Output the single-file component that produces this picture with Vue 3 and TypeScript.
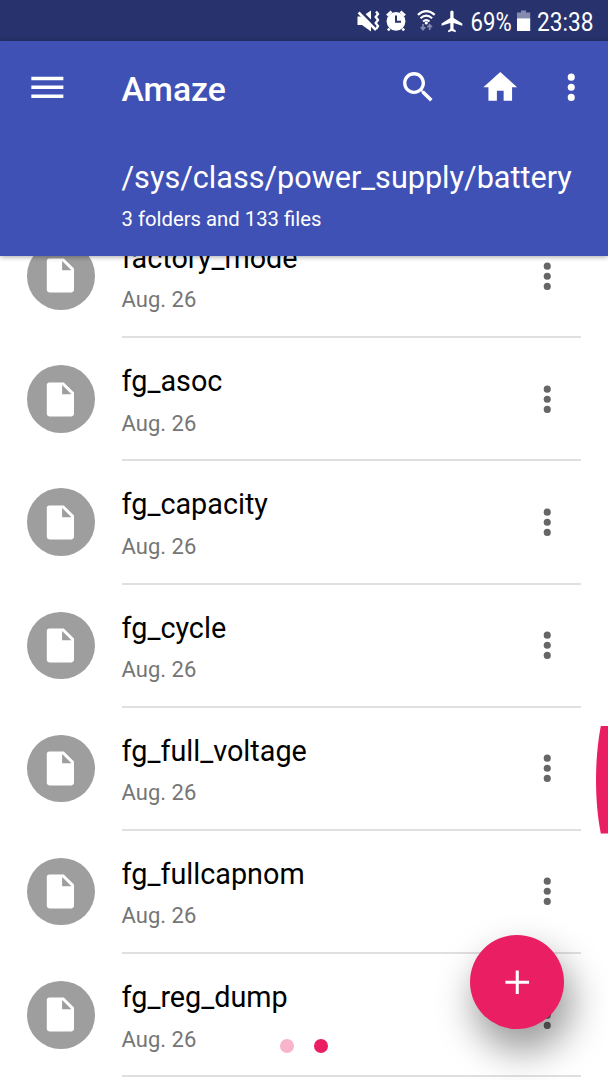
<script setup lang="ts">
interface FileEntry {
  name: string
  date: string
}

const files: FileEntry[] = [
  'factory_mode',
  'fg_asoc',
  'fg_capacity',
  'fg_cycle',
  'fg_full_voltage',
  'fg_fullcapnom',
  'fg_reg_dump',
].map((name) => ({ name, date: 'Aug. 26' }))
</script>

<template>
  <div class="screen">
    <div class="status">
      <svg class="status-art" width="608" height="40" viewBox="0 0 608 40">
        <g fill="#fff">
          <path d="M357.500 16.500h4.500l9-6v21l-9-6.500h-4.500z" />
          <path d="M360 10.500L378 28.500" stroke="#28326c" stroke-width="2.600" />
          <path d="M358.600 12.500L376 30" stroke="#fff" stroke-width="2.500" />
          <path d="M376 11.500l2 2.500-2.300 3 2.300 3-2.300 3 2.300 3-1.800 3" fill="none" stroke="#fff" stroke-width="2.300" />
        </g>
        <circle cx="396" cy="21.300" r="9.400" fill="#fff" />
        <path d="M387 15.500l4.500-4M405 15.500l-4.500-4M389.500 28.500l-1.500 2M402.500 28.500l1.500 2" stroke="#fff" stroke-width="2.600" fill="none" />
        <path d="M396 15.500v6.200h5" fill="none" stroke="#28326c" stroke-width="2" />
        <g fill="none" stroke="#fff" stroke-width="2.200">
          <path d="M417.900 14.800q8.400-7.400 16.800 0" />
          <path d="M420.500 18.300q5.800-5.300 11.600 0" />
          <path d="M423.100 21.500q3.200-2.800 6.400 0" />
        </g>
        <circle cx="426.300" cy="23" r="1.600" fill="#fff" />
        <path d="M423 24v5M420.700 27l2.300 2.600 2.300-2.600M429.700 30v-5M427.400 27.300l2.300-2.600 2.300 2.600" fill="none" stroke="#858bae" stroke-width="1.700" />
        <path transform="translate(439.400 8.200) scale(1.090)" d="M21 16v-2l-8-5V3.500c0-.83-.67-1.500-1.500-1.500S10 2.670 10 3.500V9l-8 5v2l8-2.500V19l-2 1.500V22l3.500-1 3.500 1v-1.500L13 19v-5.500l8 2.500z" fill="#fff" />
        <path d="M517 12.500h4v-2h5v2h4.200V18.500H517z" fill="#858bae" />
        <path d="M517 18.300h13.200V31H517z" fill="#fff" />
        <g class="status-text">
          <text x="470.600" y="30.500" textLength="41" lengthAdjust="spacingAndGlyphs">69%</text>
          <text x="537" y="30.500" textLength="56.500" lengthAdjust="spacingAndGlyphs">23:38</text>
        </g>
      </svg>
    </div>

    <header class="header">
      <div class="toolbar">
        <svg class="menu" viewBox="0 0 24 24"><path d="M3 18h18v-2H3v2zm0-5h18v-2H3v2zm0-7v2h18V6H3z" /></svg>
        <h1 class="title">Amaze</h1>
        <svg class="icon" viewBox="0 0 24 24"><path d="M15.500 14h-.79l-.28-.27C15.410 12.590 16 11.110 16 9.500 16 5.910 13.090 3 9.500 3S3 5.910 3 9.500 5.910 16 9.500 16c1.610 0 3.090-.59 4.230-1.570l.27.28v.79l5 4.990L20.490 19l-4.990-5zm-6 0C7.010 14 5 11.990 5 9.500S7.010 5 9.500 5 14 7.010 14 9.500 11.990 14 9.500 14z" /></svg>
        <svg class="icon home" viewBox="0 0 24 24"><path d="M10 20v-6h4v6h5v-8h3L12 3 2 12h3v8z" /></svg>
        <svg class="icon more" viewBox="0 0 24 24"><circle cx="12" cy="6" r="2.100" /><circle cx="12" cy="12" r="2.100" /><circle cx="12" cy="18" r="2.100" /></svg>
      </div>
      <div class="path">/sys/class/power_supply/battery</div>
      <div class="summary">3 folders and 133 files</div>
    </header>

    <main class="list">
      <div class="rows">
        <div v-for="file in files" :key="file.name" class="row">
          <div class="avatar">
            <svg class="file-icon" viewBox="0 0 24 24"><path d="M5.500 2C4.600 2 4 2.600 4 3.500v17c0 .9.600 1.500 1.500 1.500h13c.9 0 1.500-.6 1.500-1.500V8l-6-6H5.500zM13 9V3.500L18.500 9H13z" /></svg>
          </div>
          <div class="body">
            <div class="info">
              <div class="name">{{ file.name }}</div>
              <div class="date">{{ file.date }}</div>
            </div>
            <svg class="row-more" viewBox="0 0 24 24"><circle cx="12" cy="6" r="2.100" /><circle cx="12" cy="12" r="2.100" /><circle cx="12" cy="18" r="2.100" /></svg>
          </div>
        </div>
      </div>
    </main>

    <svg class="scroll-handle" viewBox="0 0 12 108"><path d="M12 0H4.800C-1.600 33-1.600 75 4.800 107.500H12z" /></svg>
    <div class="pager"><i class="dot faded"></i><i class="dot"></i></div>
    <button class="fab" aria-label="Add">
      <svg viewBox="0 0 24 24"><path d="M19 12.900h-6.100V19h-1.800v-6.100H5v-1.800h6.100V5h1.800v6.100H19z" /></svg>
    </button>
  </div>
</template>

<style>
body {
  margin: 0;
}
</style>

<style scoped>
.screen {
  position: relative;
  display: flex;
  flex-direction: column;
  width: 608px;
  height: 1080px;
  overflow: hidden;
  background: #fff;
  font-family: Roboto, "Liberation Sans", sans-serif;
}
.status {
  height: 40.500px;
  flex: none;
  background: #28326c;
}
.status-art {
  display: block;
}
.status-text {
  fill: #fff;
  font-size: 25.600px;
}
.header {
  position: relative;
  z-index: 1;
  box-sizing: border-box;
  flex: none;
  height: 215.700px;
  background: #3f51b5;
  color: #fff;
  box-shadow: 0 1px 5px rgba(0, 0, 0, 0.35);
}
.toolbar {
  display: flex;
  align-items: center;
  height: 95px;
  fill: #fff;
}
.menu {
  width: 42.700px;
  height: 42.700px;
  margin: -1px 0 0 25.700px;
  flex: none;
}
.title {
  margin: 4px 0 0 53.200px;
  width: 276.900px;
  font-size: 33.700px;
  line-height: 40px;
  font-weight: 500;
}
.icon {
  width: 40.530px;
  height: 40.530px;
  margin-top: -1px;
  flex: none;
}
.home {
  margin-left: 41.100px;
}
.more {
  margin-left: 30.500px;
}
.path {
  margin: 23px 0 0 121.500px;
  font-size: 30.600px;
  line-height: 38px;
  white-space: nowrap;
}
.summary {
  margin: 8px 0 0 121.500px;
  font-size: 20.300px;
  line-height: 28px;
}
.list {
  flex: 1;
  min-height: 0;
  overflow: hidden;
}
.rows {
  margin-top: -41.200px;
}
.row {
  display: flex;
  height: 123.200px;
  padding: 0 27px;
}
.avatar {
  display: flex;
  align-items: center;
  justify-content: center;
  width: 67.500px;
  height: 67.500px;
  margin-top: 27px;
  border-radius: 50%;
  background: #9e9e9e;
  flex: none;
}
.file-icon {
  width: 40.800px;
  height: 40.800px;
  fill: #fff;
}
.body {
  display: flex;
  flex: 1;
  box-sizing: border-box;
  margin-left: 27.100px;
  border-bottom: 2px solid #e0e0e0;
}
.info {
  flex: 1;
  padding-top: 25px;
}
.name {
  font-size: 28.780px;
  line-height: 36px;
  color: #000;
}
.date {
  margin-top: 10.400px;
  font-size: 22px;
  line-height: 28px;
  color: #757575;
}
.row-more {
  width: 40.530px;
  height: 40.530px;
  margin: 40.500px 13.700px 0 0;
  fill: #666;
}
.scroll-handle {
  position: absolute;
  right: 0;
  top: 726px;
  width: 12px;
  height: 108px;
  fill: #e91e63;
}
.pager {
  position: absolute;
  left: 280px;
  top: 1039px;
  display: flex;
  gap: 20px;
}
.dot {
  width: 14px;
  height: 14px;
  border-radius: 50%;
  background: #e91e63;
}
.faded {
  background: #f8b4cb;
}
.fab {
  position: absolute;
  left: 469.600px;
  top: 934.700px;
  display: flex;
  align-items: center;
  justify-content: center;
  width: 94.600px;
  height: 94.600px;
  padding: 0;
  border: 0;
  border-radius: 50%;
  background: #e91e63;
  box-shadow: 6px 20px 36px 3px rgba(0, 0, 0, 0.38);
}
.fab svg {
  width: 40.530px;
  height: 40.530px;
  fill: #fff;
}
</style>
